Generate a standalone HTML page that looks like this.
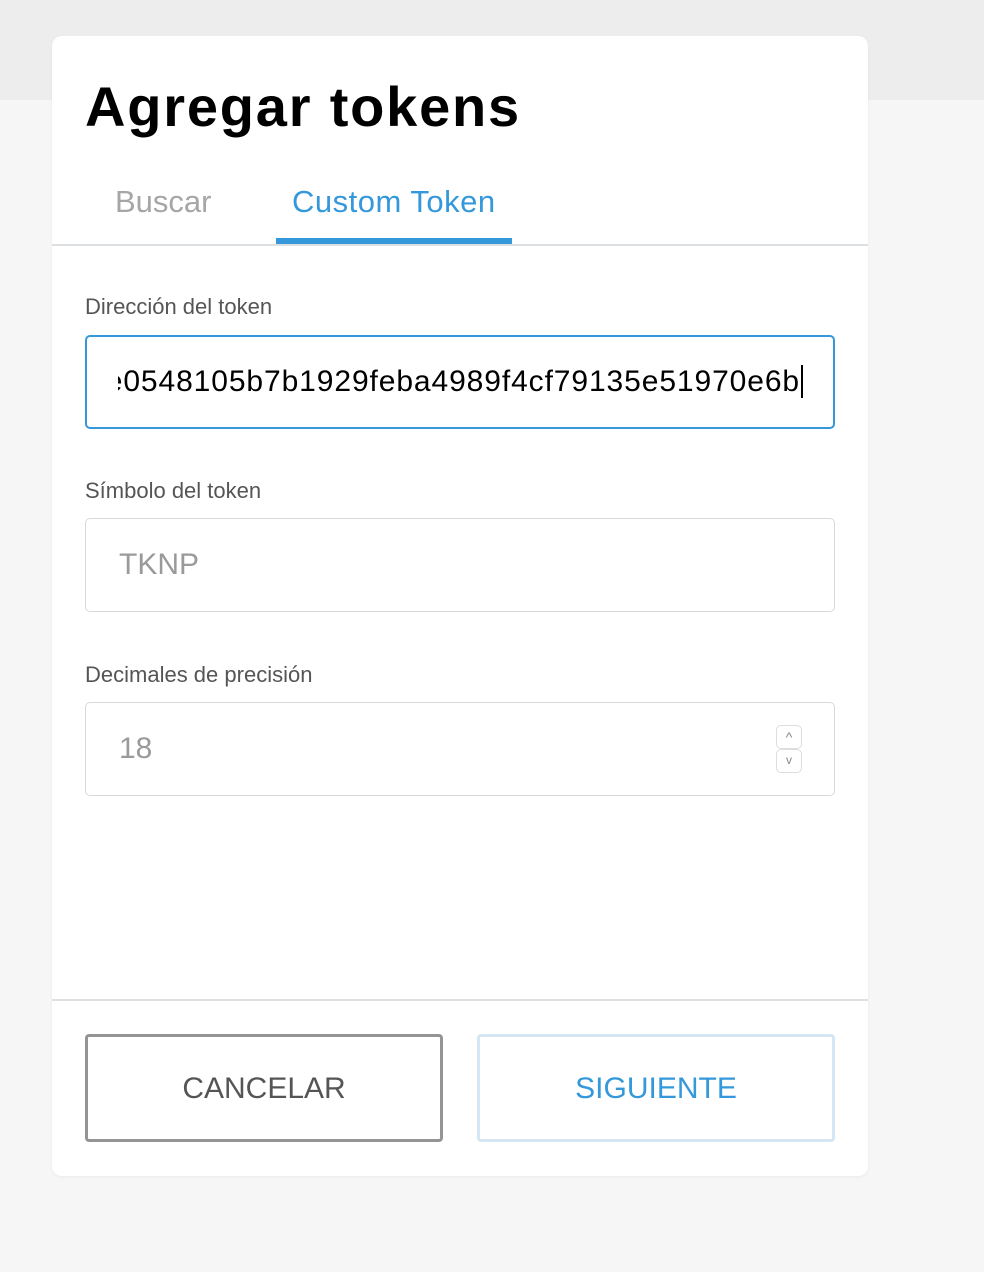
<!DOCTYPE html>
<html><head><style>
body{margin:0;width:984px;height:1272px;background:#f6f6f6;font-family:"Liberation Sans",sans-serif;position:relative;overflow:hidden}
.top{position:absolute;left:0;top:0;width:984px;height:100px;background:#ededed}
.card{position:absolute;left:52px;top:36px;width:816px;height:1140px;background:#fff;border-radius:10px;box-shadow:0 1px 3px rgba(0,0,0,.05)}
.t{position:absolute;white-space:nowrap}
h1{position:absolute;left:33px;top:38px;margin:0;font-size:56px;font-weight:bold;color:#000;letter-spacing:1.8px}
.line{position:absolute;left:0;width:816px;height:2px;background:#dde0e3}
.lbl{position:absolute;left:33px;font-size:22px;color:#555}
.inp{position:absolute;left:33px;width:750px;height:94px;border:1px solid #d6d9dc;border-radius:5px;box-sizing:border-box;font-size:30px;color:#9a9a9a;padding-left:33px;line-height:92px;overflow:hidden;white-space:nowrap}
.btn{position:absolute;top:998px;width:358px;height:108px;box-sizing:border-box;border-radius:4px;font-size:30px;text-align:center;line-height:104px}
</style></head><body>
<div class="top"></div>
<div class="card">
<h1>Agregar tokens</h1>
<div class="t" style="left:63px;top:148px;font-size:31px;color:#a6a6a6">Buscar</div>
<div class="t" style="left:240px;top:148px;font-size:31px;color:#3498db;letter-spacing:0.5px">Custom Token</div>
<div class="line" style="top:208px"></div>
<div style="position:absolute;left:224px;top:202px;width:236px;height:6px;background:#3498db"></div>
<div class="lbl" style="top:258px">Dirección del token</div>
<div class="inp" style="top:299px;border:2px solid #3498db;color:#000;padding-left:0;line-height:90px">
<div style="position:absolute;left:31px;right:30px;top:0;bottom:0;overflow:hidden"><span style="position:absolute;right:0;letter-spacing:0.9px">0x6e0548105b7b1929feba4989f4cf79135e51970e6b<span style="border-left:2px solid #000;margin-left:1px;"></span></span></div></div>
<div class="lbl" style="top:442px">Símbolo del token</div>
<div class="inp" style="top:482px">TKNP</div>
<div class="lbl" style="top:626px">Decimales de precisión</div>
<div class="inp" style="top:666px">18
<div style="position:absolute;left:690px;top:22px;width:24px;height:22px;border:1px solid #ddd;border-radius:5px;font-size:14px;line-height:22px;text-align:center;color:#888">^</div>
<div style="position:absolute;left:690px;top:46px;width:24px;height:22px;border:1px solid #ddd;border-radius:5px;font-size:12px;line-height:20px;text-align:center;color:#888">v</div>
</div>
<div class="line" style="top:963px"></div>
<div class="btn" style="left:33px;border:3px solid #959595;color:#555">CANCELAR</div>
<div class="btn" style="left:425px;border:3px solid #d4e6f3;color:#3498db">SIGUIENTE</div>
</div>
</body></html>
